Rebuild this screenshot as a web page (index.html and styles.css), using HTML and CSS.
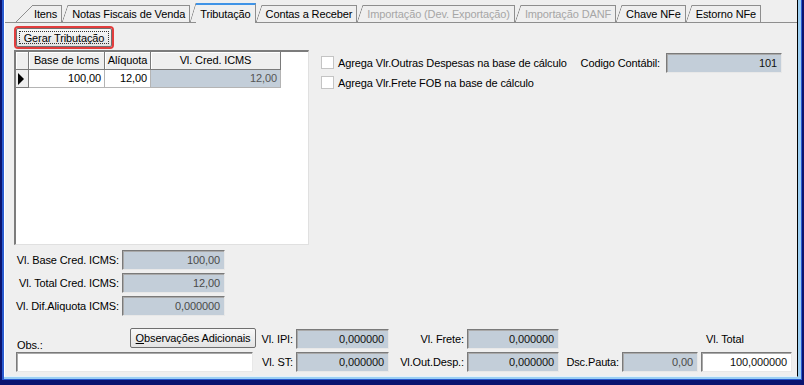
FILE: index.html
```html
<!DOCTYPE html>
<html>
<head>
  <meta charset="utf-8">
  <title>Tributação</title>
  <link rel="stylesheet" href="styles.css">
</head>
<body>

<div class="window">
 <div class="frame">
  <div class="client">

    <!-- abas -->
    <div class="tabs">
      <span class="tab first">Itens</span>
      <span class="tab">Notas Fiscais de Venda</span>
      <span class="tab active">Tributação</span>
      <span class="tab">Contas a Receber</span>
      <span class="tab disabled">Importação (Dev. Exportação)</span>
      <span class="tab disabled">Importação DANF</span>
      <span class="tab">Chave NFe</span>
      <span class="tab">Estorno NFe</span>
    </div>

    <div class="page">
      <button class="btn focused gerar">Gerar Tributação</button>

      <div class="main-row">
        <div class="dbgrid">
          <div class="gh ind"></div>
          <div class="gh">Base de Icms</div>
          <div class="gh">Alíquota</div>
          <div class="gh">Vl. Cred. ICMS</div>

          <div class="gc ind"><span class="arrow"></span></div>
          <div class="gc">100,00</div>
          <div class="gc">12,00</div>
          <div class="gc ro">12,00</div>
        </div>

        <div class="side">
          <div class="checks">
            <label class="check"><span class="box"></span>Agrega Vlr.Outras Despesas na base de cálculo</label>
            <label class="check"><span class="box"></span>Agrega Vlr.Frete FOB na base de cálculo</label>
          </div>
          <div class="codigo">
            <span class="lbl">Codigo Contábil:</span>
            <span class="edit wide">101</span>
          </div>
        </div>
      </div>

      <div class="fields">
        <span class="lbl">Vl. Base Cred. ICMS:</span><span class="edit dim">100,00</span>
        <span class="lbl">Vl. Total Cred. ICMS:</span><span class="edit dim">12,00</span>
        <span class="lbl">Vl. Dif.Aliquota ICMS:</span><span class="edit dim">0,000000</span>
      </div>

      <div class="bottom">
        <div class="obs-head">
          <span class="obs-lbl">Obs.:</span>
          <button class="btn obs-btn"><u>O</u>bservações Adicionais</button>
        </div>
        <span class="lbl top">Vl. IPI:</span>
        <span class="edit top">0,000000</span>
        <span class="lbl top">Vl. Frete:</span>
        <span class="edit top">0,000000</span>
        <span class="lbl top c6"></span>
        <span class="total-lbl">Vl. Total</span>

        <span class="edit white obs"></span>
        <span class="lbl">Vl. ST:</span>
        <span class="edit">0,000000</span>
        <span class="lbl">Vl.Out.Desp.:</span>
        <span class="edit">0,000000</span>
        <span class="lbl">Dsc.Pauta:</span>
        <span class="edit dim">0,00</span>
        <span class="edit white total">100,000000</span>
      </div>
    </div>

  </div>
 </div>
</div>

</body>
</html>
```

FILE: styles.css
```css
body {
  margin: 0;
  font-family: "Liberation Sans", Arial, sans-serif;
  font-size: 11px;
  letter-spacing: -0.12px;
  color: #000;
}

/* moldura da janela */
.window {
  width: 804px;
  height: 385px;
  box-sizing: border-box;
  background: #0a1470;
  padding: 0 2px 5px 2px;
}
.frame {
  height: 100%;
  box-sizing: border-box;
  background: #9ccff2;
  border-left: 2px solid #2a5bd0;
  border-right: 1px solid #2a5bd0;
  border-bottom: 1px solid #2a5bd0;
  padding: 0 3px 2px 0;
}
.client {
  height: 100%;
  box-sizing: border-box;
  background: #efefef;
  border-left: 1px solid #fff;
  border-right: 1px solid #000;
  border-bottom: 1px solid #e4f2fb;
}

/* abas */
.tabs {
  display: flex;
  align-items: flex-end;
  height: 22px;
  border-bottom: 1px solid #8e8e8e;
  padding-left: 28px;
}
.tab {
  position: relative;
  height: 16px;
  line-height: 16px;
  border-top: 1px solid #8e8e8e;
  border-right: 1px solid #8e8e8e;
  padding: 0 4px 0 4px;
  margin-left: 6px;
  white-space: nowrap;
  background: #efefef;
}
.tab::before {
  content: "";
  position: absolute;
  left: -6px;
  top: -1px;
  width: 6px;
  height: 18px;
  background: linear-gradient(to bottom right, transparent calc(50% - 0.7px), #8e8e8e 50%, transparent calc(50% + 0.7px));
}
.tab.first {
  margin-left: 0;
  padding-left: 1px;
}
.tab.first::before {
  left: -18px;
  width: 18px;
}
.tab.active {
  height: 18px;
  line-height: 19px;
  border-top: 2px solid #3f93e6;
  margin-bottom: -1px;
  z-index: 1;
}
.tab.active::before {
  top: -2px;
  height: 20px;
}
.tab.disabled {
  color: #a6a6a6;
}

/* conteúdo */
.page {
  padding: 5px 0 0 9px;
}

.btn {
  font-family: inherit;
  font-size: 11px;
  letter-spacing: -0.12px;
  color: #000;
  height: 19px;
  border: 1px solid #6f6f6f;
  border-radius: 2px;
  background: linear-gradient(#f8f8f8, #e3e3e3);
  padding: 0;
  display: block;
}
.btn.focused {
  box-shadow: 0 0 0 2px #e23d3d;
  outline: 1px dotted #333;
  outline-offset: -4px;
}
.gerar {
  width: 96px;
  margin-left: 2px;
}

.main-row {
  display: flex;
  margin-top: 3px;
}

.dbgrid {
  width: 295px;
  height: 195px;
  box-sizing: border-box;
  border-style: solid;
  border-width: 2px 1px 1px 2px;
  border-color: #7c7c7c #e0e0e0 #e0e0e0 #7c7c7c;
  background: #fff;
  display: grid;
  grid-template-columns: 13px 76px 46px 130px;
  grid-template-rows: 18px 18px;
  align-content: start;
}
.gh {
  background: #efefef;
  border-right: 1px solid #7a7a7a;
  border-bottom: 1px solid #7a7a7a;
  box-shadow: inset 1px 1px #fff;
  text-align: center;
  line-height: 17px;
}
.gc {
  border-right: 1px solid #b4b4b4;
  border-bottom: 1px solid #b4b4b4;
  text-align: right;
  padding-right: 3px;
  line-height: 17px;
}
.gc.ind {
  background: #efefef;
  border-right: 1px solid #7a7a7a;
  border-bottom: 1px solid #7a7a7a;
  padding: 0 0 0 2px;
  display: flex;
  align-items: center;
}
.arrow {
  width: 0;
  height: 0;
  border-left: 6px solid #000;
  border-top: 6px solid transparent;
  border-bottom: 6px solid transparent;
}
.gc.ro {
  background: #c3ced9;
  color: #555;
}

.side {
  flex: 1;
  display: flex;
  padding: 3px 15px 0 12px;
}
.checks {
  display: flex;
  flex-direction: column;
  gap: 7px;
  padding-top: 3px;
}
.check {
  display: flex;
  align-items: center;
  height: 13px;
  gap: 4px;
}
.box {
  width: 11px;
  height: 11px;
  border: 1px solid #c4c4c4;
  background: #fff;
}
.codigo {
  margin-left: auto;
  display: flex;
  align-items: center;
  gap: 3px;
  height: 20px;
}

.lbl {
  text-align: right;
  padding-right: 3px;
  line-height: 20px;
  white-space: nowrap;
}

.edit {
  box-sizing: border-box;
  height: 20px;
  border-style: solid;
  border-width: 1px;
  border-color: #7a7a7a #e8e8e8 #e8e8e8 #7a7a7a;
  box-shadow: inset 1px 1px #a9a9a9;
  background: #c3ced9;
  text-align: right;
  padding-right: 4px;
  line-height: 18px;
  color: #111;
}
.edit.wide {
  width: 116px;
}
.edit.dim {
  color: #4a4a4a;
}
.edit.white {
  background: #fff;
}

.fields {
  display: grid;
  grid-template-columns: 108px 103px;
  grid-auto-rows: 20px;
  row-gap: 3px;
  margin-top: 5px;
}

.bottom {
  display: grid;
  grid-template-columns: 240px 40px 93px 78px 92px 63px 76px 3px 91px;
  grid-template-rows: 21px 20px;
  row-gap: 3px;
  margin: 12px 0 0 2px;
}
.bottom .top {
  align-self: end;
}
.obs-head {
  display: flex;
  align-items: flex-start;
  justify-content: space-between;
}
.obs-lbl {
  align-self: flex-end;
  padding-left: 1px;
  line-height: 13px;
  margin-bottom: -3px;
}
.obs-btn {
  width: 126px;
  height: 20px;
}
.c6 {
  grid-column: 6 / 9;
}
.total-lbl {
  grid-column: 9;
  padding-left: 5px;
  line-height: 20px;
  align-self: end;
}
.edit.obs {
  grid-column: 1;
  width: 237px;
}
.edit.total {
  grid-column: 9;
}
```
